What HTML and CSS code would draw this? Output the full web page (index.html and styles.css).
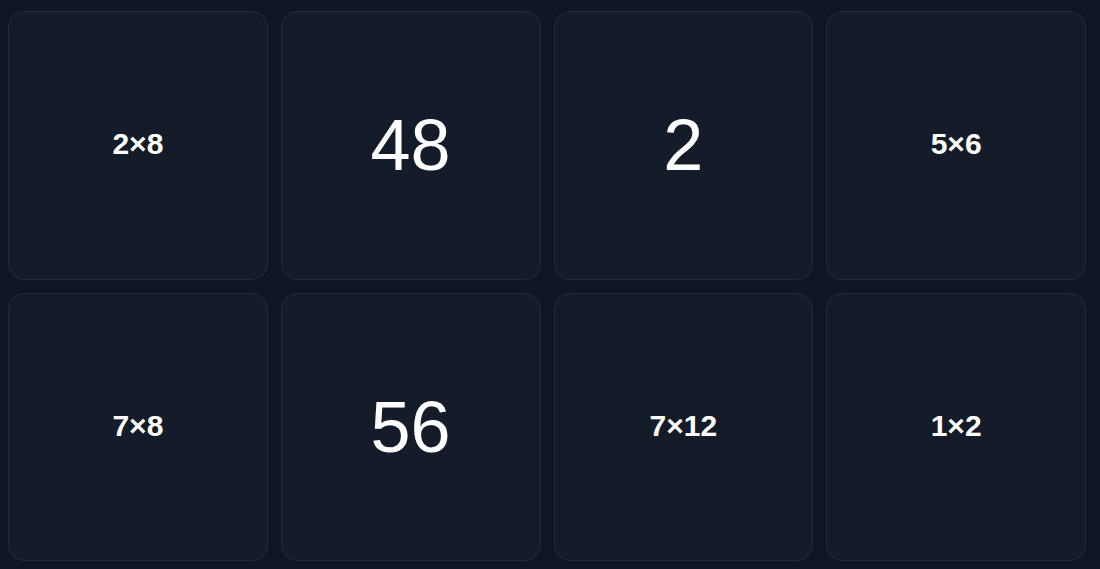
FILE: index.html
```html
<!DOCTYPE html>
<html>
<head>
<meta charset="utf-8">
<link rel="stylesheet" href="styles.css">
</head>
<body>
<div class="grid">
  <div class="card"><span class="expr">2×8</span></div>
  <div class="card"><span class="answer">48</span></div>
  <div class="card"><span class="answer">2</span></div>
  <div class="card"><span class="expr">5×6</span></div>
  <div class="card"><span class="expr">7×8</span></div>
  <div class="card"><span class="answer">56</span></div>
  <div class="card"><span class="expr">7×12</span></div>
  <div class="card"><span class="expr">1×2</span></div>
</div>
</body>
</html>
```
FILE: styles.css
```css
html, body {
  margin: 0;
  padding: 0;
  background: #0f1522;
  height: 100%;
}
body {
  font-family: "Liberation Sans", Arial, sans-serif;
  color: #ffffff;
  padding: 11px 14px 8px 8px;
  box-sizing: border-box;
}
.grid {
  display: grid;
  grid-template-columns: repeat(4, 1fr);
  grid-template-rows: repeat(2, 1fr);
  gap: 13px;
  height: 100%;
}
.card {
  background: #141b29;
  border: 1px solid #232c3b;
  border-radius: 16px;
  display: flex;
  align-items: center;
  justify-content: center;
}
.expr {
  font-size: 30px;
  font-weight: 700;
  margin-bottom: 2px;
}
.answer {
  font-size: 72px;
  font-weight: 400;
}
```
